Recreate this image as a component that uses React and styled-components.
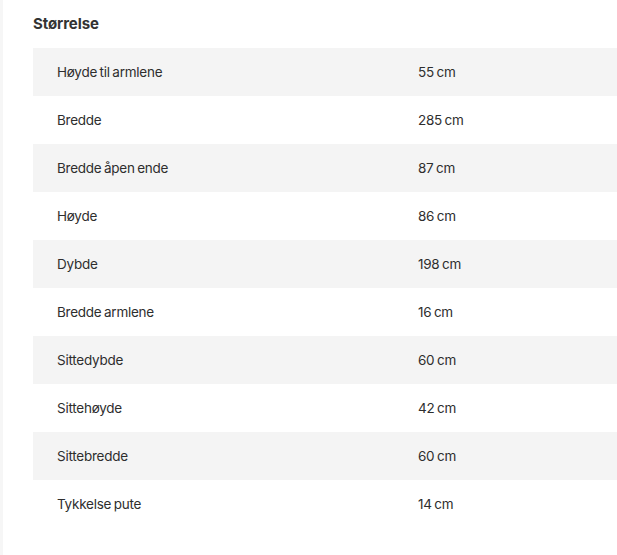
import React from "react"
import styled, { createGlobalStyle } from "styled-components"

const rows = [
  ["Høyde til armlene", "55 cm"],
  ["Bredde", "285 cm"],
  ["Bredde åpen ende", "87 cm"],
  ["Høyde", "86 cm"],
  ["Dybde", "198 cm"],
  ["Bredde armlene", "16 cm"],
  ["Sittedybde", "60 cm"],
  ["Sittehøyde", "42 cm"],
  ["Sittebredde", "60 cm"],
  ["Tykkelse pute", "14 cm"],
]

const App = () => {
  return (
    <Page>
      <GlobalStyle />
      <Section>
        <Heading>Størrelse</Heading>
        <Table>
          {rows.map(([label, value], i) => (
            <Row key={label} $shaded={i % 2 === 0}>
              <Cell>{label}</Cell>
              <Cell>{value}</Cell>
            </Row>
          ))}
        </Table>
      </Section>
    </Page>
  )
}

export default App

const GlobalStyle = createGlobalStyle`
  body {
    margin: 0;
    background: #fff;
    font-family: Inter, "Liberation Sans", sans-serif;
  }
`

const Page = styled.div`
  display: flex;
  min-height: 555px;
  border-left: 3px solid #f6f6f6;
`

const Section = styled.div`
  flex: 1;
  padding: 14px 0 0 30px;
`

const Heading = styled.h2`
  margin: 0 0 14px;
  font-size: 15px;
  line-height: 20px;
  font-weight: 700;
  color: #333;
  letter-spacing: -0.1px;
`

const Table = styled.div`
  display: flex;
  flex-direction: column;
`

const Row = styled.div`
  display: grid;
  grid-template-columns: 361px 1fr;
  height: 48px;
  align-items: center;
  background: ${p => (p.$shaded ? "#f4f4f4" : "#fff")};
`

const Cell = styled.div`
  padding-left: 24px;
  font-size: 13.5px;
  color: #2e2e2e;
  letter-spacing: -0.25px;
  word-spacing: -1px;
`
